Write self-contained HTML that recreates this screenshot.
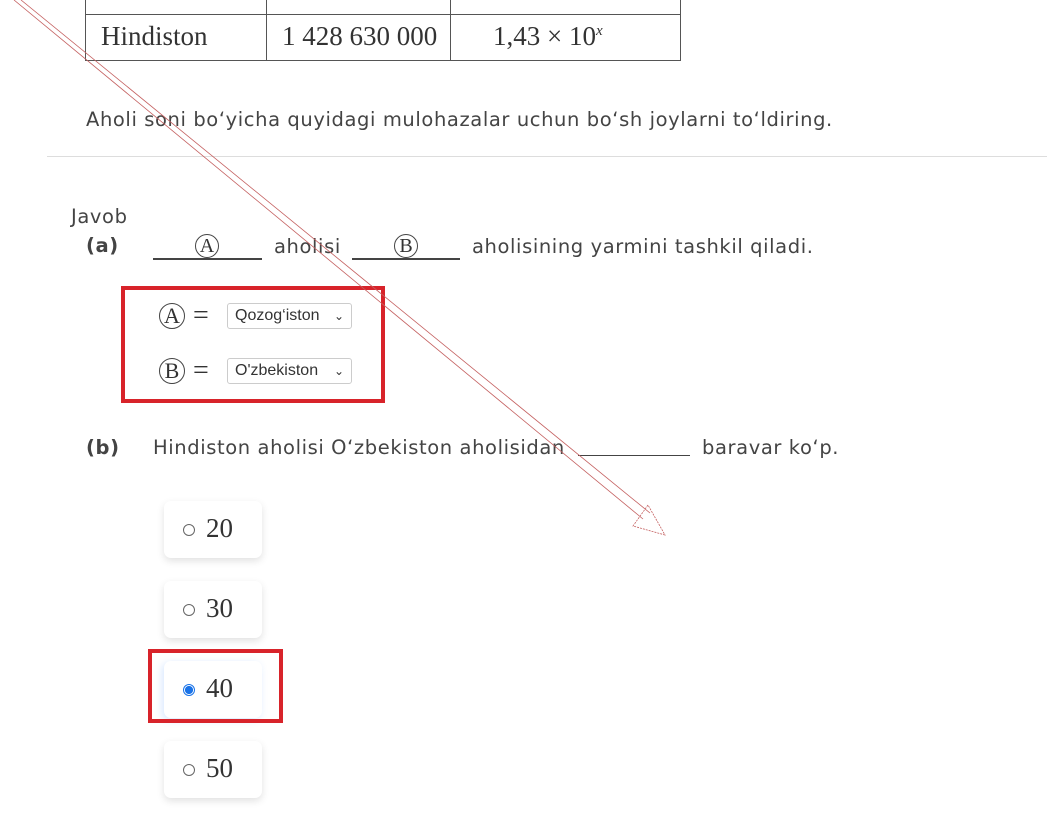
<!DOCTYPE html>
<html><head><meta charset="utf-8"><style>
body{margin:0;width:1047px;height:823px;background:#fff;position:relative;overflow:hidden;font-family:"DejaVu Sans",sans-serif;color:#444}
.a{position:absolute;white-space:nowrap}
.t{font-size:19.5px;letter-spacing:0.6px}
.s{font-family:"Liberation Serif",serif;color:#333}
.c{position:absolute;border:1.3px solid #444;border-radius:50%;font-family:"Liberation Serif",serif;color:#333;text-align:center;box-sizing:border-box}
.sel{position:absolute;width:125px;height:26px;box-sizing:border-box;border:1px solid #ccc;border-radius:3px;font-family:"Liberation Sans",sans-serif;font-size:16px;line-height:24px;padding:0 7px;color:#333;background:#fff}
.sel span{position:absolute;right:7px;top:0;font-size:12px}
.card{position:absolute;left:164px;width:98px;height:57px;border-radius:7px;background:#fff;box-shadow:0 3px 8px rgba(0,0,0,.12)}
.rad{position:absolute;left:19px;top:23px;width:10px;height:10px;border:1px solid #666;border-radius:50%}
.num{position:absolute;left:42px;top:12px;font-family:"Liberation Serif",serif;font-size:27px;color:#333}
.red{position:absolute;border:4px solid #d8232a}
</style></head><body>
<div class="a" style="left:85px;top:-2px;width:594px;height:62px;border:1px solid #555;border-top:none"></div>
<div class="a" style="left:85px;top:14px;width:595px;border-top:1px solid #555"></div>
<div class="a" style="left:266px;top:0;height:61px;border-left:1px solid #555"></div>
<div class="a" style="left:450px;top:0;height:61px;border-left:1px solid #555"></div>
<div class="a s" style="left:101px;top:21px;font-size:27px">Hindiston</div>
<div class="a s" style="left:282px;top:21px;font-size:27px">1 428 630 000</div>
<div class="a s" style="left:493px;top:21px;font-size:27px">1,43 × 10<sup style="font-size:15px;font-style:italic">x</sup></div>
<div class="a t" style="left:86px;top:108px">Aholi soni bo‘yicha quyidagi mulohazalar uchun bo‘sh joylarni to‘ldiring.</div>
<div class="a" style="left:47px;top:156px;width:1000px;border-top:1px solid #ddd"></div>
<div class="a t" style="left:71px;top:205px">Javob</div>
<div class="a t" style="left:86px;top:234px;font-weight:bold">(a)</div>
<div class="a" style="left:153px;top:258px;width:109px;border-top:2px solid #444"></div>
<div class="c" style="left:195px;top:234px;width:24px;height:24px;font-size:20px;line-height:22px">A</div>
<div class="a t" style="left:274px;top:235px">aholisi</div>
<div class="a" style="left:352px;top:258px;width:108px;border-top:2px solid #444"></div>
<div class="c" style="left:394px;top:234px;width:24px;height:24px;font-size:20px;line-height:22px">B</div>
<div class="a t" style="left:472px;top:235px">aholisining yarmini tashkil qiladi.</div>
<div class="red" style="left:121px;top:286px;width:256px;height:109px"></div>
<div class="c" style="left:159px;top:303px;width:26px;height:26px;font-size:22px;line-height:24px">A</div>
<div class="a s" style="left:193px;top:300px;font-size:28px">=</div>
<div class="sel" style="left:227px;top:303px">Qozog‘iston<span>⌄</span></div>
<div class="c" style="left:159px;top:358px;width:26px;height:26px;font-size:22px;line-height:24px">B</div>
<div class="a s" style="left:193px;top:355px;font-size:28px">=</div>
<div class="sel" style="left:227px;top:358px">O'zbekiston<span>⌄</span></div>
<div class="a t" style="left:86px;top:436px;font-weight:bold">(b)</div>
<div class="a t" style="left:153px;top:436px">Hindiston aholisi O‘zbekiston aholisidan</div>
<div class="a" style="left:578px;top:455px;width:112px;border-top:1px solid #444"></div>
<div class="a t" style="left:702px;top:436px">baravar ko‘p.</div>
<div class="card" style="top:501px"><div class="rad"></div><div class="num">20</div></div>
<div class="card" style="top:581px"><div class="rad"></div><div class="num">30</div></div>
<div class="card" style="top:661px;box-shadow:-2px 2px 8px rgba(60,140,255,.2)"><div class="rad" style="border-color:#1a73e8;background:radial-gradient(#1a73e8 55%,#fff 60%)"></div><div class="num">40</div></div>
<div class="card" style="top:741px"><div class="rad"></div><div class="num">50</div></div>
<div class="red" style="left:148px;top:649px;width:127px;height:66px"></div>
<svg class="a" style="left:0;top:0" width="1047" height="823">
<g stroke="#c46060" stroke-width="0.8" fill="none">
<line x1="14" y1="0" x2="643" y2="519"/><line x1="21" y1="0" x2="650" y2="513"/>
<polygon points="665,535 633,526 648,505" stroke-dasharray="2,1"/>
</g></svg>
</body></html>
